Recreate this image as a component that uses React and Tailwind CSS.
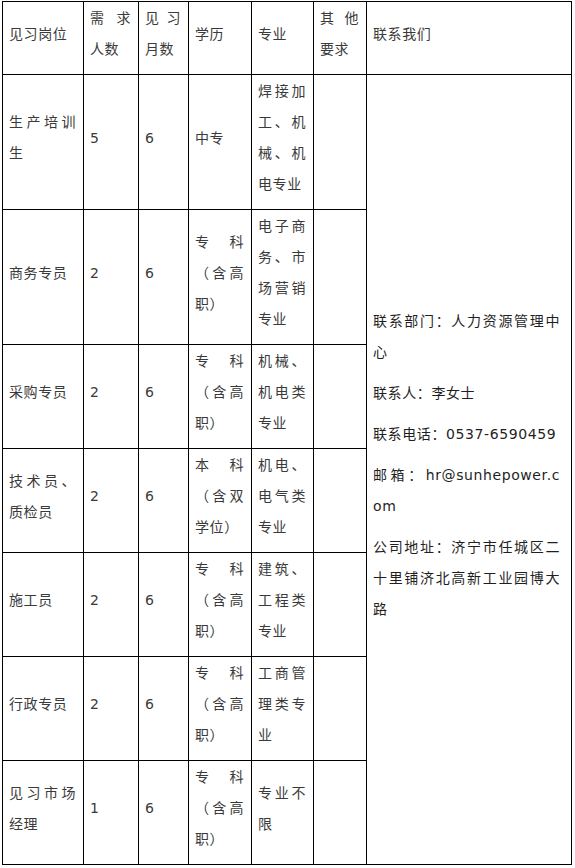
import React from 'react';

const jobs = [
    { title: '生产培训生', count: '5', months: '6', edu: '中专', major: '焊接加工、机械、机电专业' },
    { title: '商务专员', count: '2', months: '6', edu: '专科（含高职）', major: '电子商务、市场营销专业' },
    { title: '采购专员', count: '2', months: '6', edu: '专科（含高职）', major: '机械、机电类专业' },
    { title: '技术员、质检员', count: '2', months: '6', edu: '本科（含双学位）', major: '机电、电气类专业' },
    { title: '施工员', count: '2', months: '6', edu: '专科（含高职）', major: '建筑、工程类专业' },
    { title: '行政专员', count: '2', months: '6', edu: '专科（含高职）', major: '工商管理类专业' },
    { title: '见习市场经理', count: '1', months: '6', edu: '专科（含高职）', major: '专业不限' },
];

const contacts = [
    '联系部门：人力资源管理中心',
    '联系人：李女士',
    '联系电话：0537-6590459',
    '邮箱：hr@sunhepower.com',
    '公司地址：济宁市任城区二十里铺济北高新工业园博大路',
];

const cell = 'border border-black pl-[6px] pr-[7px] pt-[1px] pb-[9px] align-middle text-justify break-all';

export default function App() {
    return (
        <div className="min-h-[868px] bg-white pt-[1px] pl-[2px]">
            <table className="w-[569px] table-fixed border-collapse text-[14px] leading-[31px] tracking-[0.6px] text-[#3a3a3a] font-['DejaVu_Sans','Noto_Sans_CJK_SC',sans-serif]">
                <colgroup>
                    <col className="w-[81px]" />
                    <col className="w-[55px]" />
                    <col className="w-[50px]" />
                    <col className="w-[63px]" />
                    <col className="w-[62px]" />
                    <col className="w-[53px]" />
                    <col className="w-[205px]" />
                </colgroup>
                <tbody>
                    {/* 表头 */}
                    <tr>
                        <td className={cell}>见习岗位</td>
                        <td className={cell}>需求人数</td>
                        <td className={cell}>见习月数</td>
                        <td className={cell}>学历</td>
                        <td className={cell}>专业</td>
                        <td className={cell}>其他要求</td>
                        <td className={cell}>联系我们</td>
                    </tr>

                    {jobs.map((job, i) => (
                        <tr key={job.title}>
                            <td className={cell}>{job.title}</td>
                            <td className={cell}>{job.count}</td>
                            <td className={cell}>{job.months}</td>
                            <td className={cell}>{job.edu}</td>
                            <td className={cell}>{job.major}</td>
                            <td className={cell}></td>
                            {i === 0 && (
                                <td
                                    rowSpan={jobs.length}
                                    className="border border-black pl-[6px] pr-[11px] pt-[1px] pb-[9px] align-middle text-justify break-all text-[#1f1f1f]"
                                >
                                    <div className="flex flex-col gap-[10px]">
                                        {contacts.map((line) => (
                                            <p key={line}>{line}</p>
                                        ))}
                                    </div>
                                </td>
                            )}
                        </tr>
                    ))}
                </tbody>
            </table>
        </div>
    );
}
